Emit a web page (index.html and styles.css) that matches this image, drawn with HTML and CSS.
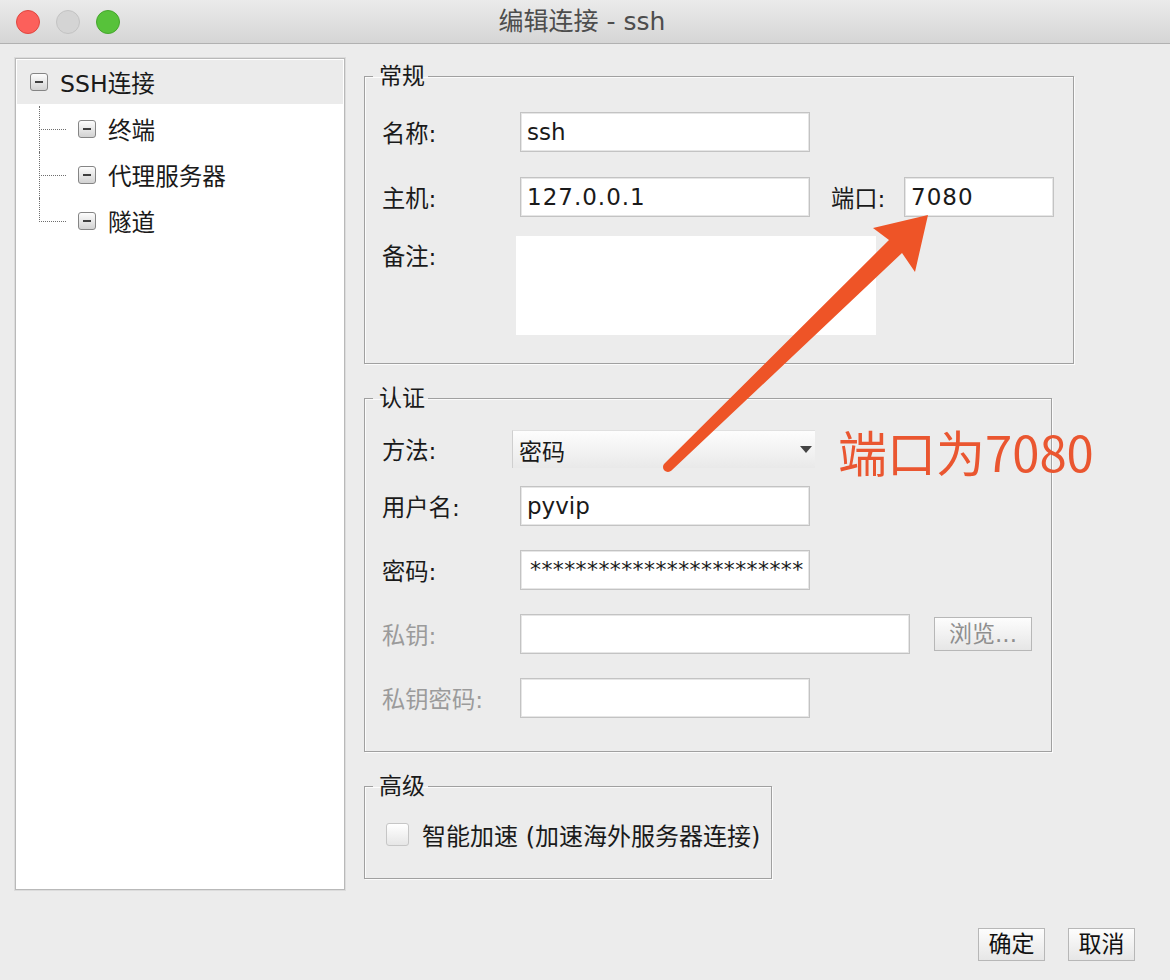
FILE: index.html
```html
<!DOCTYPE html>
<html lang="zh-CN">
<head>
	<meta charset="UTF-8">
	<title>编辑连接 - ssh</title>
	<link rel="stylesheet" href="styles.css">
</head>
<body>
<div class="window">
   <!-- 标题栏 -->
   <div class="titlebar">
      <div class="lights">
         <span class="light close"></span>
         <span class="light min"></span>
         <span class="light max"></span>
      </div>
      <div class="title">编辑连接 - ssh</div>
      <div></div>
   </div>

   <div class="main">
      <!-- 左侧树 -->
      <div class="tree">
         <div class="node root"><span class="toggle"></span>SSH连接</div>
         <div class="children">
            <div class="node"><span class="toggle"></span>终端</div>
            <div class="node"><span class="toggle"></span>代理服务器</div>
            <div class="node"><span class="toggle"></span>隧道</div>
         </div>
      </div>

      <!-- 右侧表单 -->
      <div class="forms">
         <fieldset class="group general">
            <legend>常规</legend>
            <div class="row">
               <label>名称:</label>
               <div class="field w290">ssh</div>
            </div>
            <div class="row gap25">
               <label>主机:</label>
               <div class="field w290 num">127.0.0.1</div>
               <label class="port-label">端口:</label>
               <div class="field w150 num">7080</div>
            </div>
            <div class="row note gap19">
               <label>备注:</label>
               <div class="textarea"></div>
            </div>
         </fieldset>

         <fieldset class="group auth">
            <legend>认证</legend>
            <div class="row">
               <label>方法:</label>
               <div class="combo">密码<span class="caret"></span></div>
            </div>
            <div class="row gap17">
               <label>用户名:</label>
               <div class="field w290">pyvip</div>
            </div>
            <div class="row gap24">
               <label>密码:</label>
               <div class="field w290 pwd">************************</div>
            </div>
            <div class="row gap24 disabled">
               <label>私钥:</label>
               <div class="field w390"></div>
               <button class="btn browse">浏览...</button>
            </div>
            <div class="row gap24 disabled">
               <label>私钥密码:</label>
               <div class="field w290"></div>
            </div>
         </fieldset>

         <fieldset class="group advanced">
            <legend>高级</legend>
            <div class="check-row">
               <span class="check"></span>智能加速 (加速海外服务器连接)
            </div>
         </fieldset>
      </div>
   </div>

   <div class="actions">
      <button class="btn">确定</button>
      <button class="btn">取消</button>
   </div>

   <!-- 标注 -->
   <svg class="arrow" width="1170" height="980" viewBox="0 0 1170 980">
      <path d="M873 228 L928 215 L915 272 L902 253 L671.5 470.6 A5 5 0 0 1 664.5 463.4 L889 240 Z" fill="#ee5427"/>
   </svg>
   <div class="annotation">端口为7080</div>
</div>
</body>
</html>
```

FILE: styles.css
```css
* {
	box-sizing: border-box;
}
html, body {
	margin: 0;
	background: #ececec;
}
body {
	font-family: "DejaVu Sans", "Noto Sans CJK SC", sans-serif;
	color: #1a1a1a;
}
.window {
	position: relative;
	width: 1170px;
	height: 980px;
	overflow: hidden;
	background: #ececec;
}

/* 标题栏 */
.titlebar {
	height: 44px;
	display: grid;
	grid-template-columns: 1fr auto 1fr;
	align-items: center;
	background: linear-gradient(#ebebeb, #d5d5d5);
	border-bottom: 1px solid #b1b1b1;
}
.lights {
	display: flex;
	gap: 16px;
	padding-left: 16px;
}
.light {
	width: 24px;
	height: 24px;
	border-radius: 50%;
}
.close {
	background: #fc605b;
	border: 1px solid #e0463f;
}
.min {
	background: #d4d4d4;
	border: 1px solid #c3c3c3;
}
.max {
	background: #57c23a;
	border: 1px solid #45a62d;
}
.title {
	font-size: 25px;
	line-height: 30px;
	color: #4d4d4d;
	margin-left: -6px;
}

/* 主体 */
.main {
	display: flex;
	align-items: flex-start;
	gap: 19px;
	padding: 14px 0 0 15px;
}

/* 树 */
.tree {
	width: 330px;
	height: 832px;
	background: #fff;
	border: 1px solid #b9b9b9;
	box-shadow: 0 0 0 1px #dcdcdc;
	padding: 1px;
	font-size: 23.6px;
}
.node {
	display: flex;
	align-items: center;
	height: 44px;
}
.root {
	background: #ebebeb;
	padding-left: 13px;
}
.toggle {
	width: 18px;
	height: 18px;
	margin-right: 12px;
	border: 1px solid #858585;
	border-radius: 3px;
	background: linear-gradient(#fdfdfd, #d2d2d2);
	display: flex;
	align-items: center;
	justify-content: center;
}
.toggle::after {
	content: "";
	width: 8px;
	height: 2px;
	background: #3f3f3f;
}
.children {
	padding-top: 2px;
}
.children .node {
	position: relative;
	height: 46px;
	padding-left: 61px;
}
.children .node::before {
	content: "";
	position: absolute;
	left: 22px;
	top: 0;
	width: 26px;
	height: 50%;
	border-left: 1px dotted #6e6e6e;
	border-bottom: 1px dotted #6e6e6e;
}
.children .node:not(:last-child)::after {
	content: "";
	position: absolute;
	left: 22px;
	top: 50%;
	height: 50%;
	border-left: 1px dotted #6e6e6e;
}

/* 表单 */
.forms {
	margin-top: 3px;
	display: flex;
	flex-direction: column;
	align-items: flex-start;
	gap: 19px;
}
.group {
	margin: 0;
	min-width: 0;
	padding: 0 0 0 17px;
	border: 1px solid #a0a0a0;
	box-shadow: inset 1px 1px 0 #fbfbfb, 1px 1px 0 #fbfbfb;
}
.group legend {
	font-size: 23px;
	line-height: 30px;
	padding: 0 3px 0 6px;
	margin-left: -9px;
}
.general {
	width: 710px;
	padding-top: 21px;
	padding-bottom: 28px;
}
.auth {
	width: 688px;
	padding-top: 16px;
	padding-bottom: 33px;
}
.advanced {
	width: 408px;
	padding-top: 18px;
	padding-bottom: 29px;
}
.row {
	display: flex;
	align-items: center;
	height: 40px;
}
.gap17 { margin-top: 17px; }
.gap19 { margin-top: 19px; }
.gap24 { margin-top: 24px; }
.gap25 { margin-top: 25px; }
.row label {
	flex: none;
	width: 138px;
	font-size: 23.3px;
}
.disabled label {
	color: #9b9b9b;
}
.field {
	height: 40px;
	padding-left: 6px;
	background: #fff;
	border: 1px solid #c3c3c3;
	box-shadow: inset 0 0 0 1px #e6e6e6;
	font-size: 23px;
	line-height: 38px;
	white-space: nowrap;
	overflow: hidden;
}
.w150 { width: 150px; }
.w290 { width: 290px; }
.w390 { width: 390px; }
.num {
	letter-spacing: 1px;
}
.pwd {
	padding-left: 9px;
	font-size: 22px;
	letter-spacing: 0.4px;
}
.row .port-label {
	width: 73px;
	margin-left: 21px;
}
.note {
	height: 99px;
	align-items: flex-start;
}
.note label {
	margin-top: 2px;
}
.textarea {
	width: 360px;
	height: 99px;
	margin-left: -4px;
	background: #fff;
}
.combo {
	width: 303px;
	height: 38px;
	margin-left: -8px;
	padding: 0 3px 0 6px;
	display: flex;
	align-items: center;
	justify-content: space-between;
	background: linear-gradient(#fdfdfd, #e9e9e9);
	border-left: 1px solid #cfcfcf;
	border-top: 1px solid #e0e0e0;
	font-size: 23px;
}
.caret {
	width: 0;
	height: 0;
	border-left: 6px solid transparent;
	border-right: 6px solid transparent;
	border-top: 7px solid #444;
}
.btn {
	width: 67px;
	height: 33px;
	padding: 0;
	font-family: inherit;
	font-size: 23px;
	line-height: 31px;
	color: #111;
	border: 1px solid #b7b7b7;
	background: linear-gradient(#fdfdfd, #e6e6e6);
}
.browse {
	width: 98px;
	height: 34px;
	margin-left: 24px;
	color: #8f8f8f;
}
.check-row {
	display: flex;
	align-items: center;
	height: 30px;
	font-size: 24px;
}
.check {
	width: 23px;
	height: 23px;
	margin: 0 13px 0 4px;
	border: 1px solid #c6c6c6;
	border-radius: 3px;
	background: linear-gradient(#fff, #e6e6e6);
}

/* 底部按钮 */
.actions {
	display: flex;
	justify-content: flex-end;
	gap: 23px;
	margin-top: 38px;
	padding-right: 35px;
}

/* 标注 */
.arrow {
	position: absolute;
	left: 0;
	top: 0;
	pointer-events: none;
}
.annotation {
	position: absolute;
	left: 838px;
	top: 426px;
	font-family: "Noto Sans CJK SC", sans-serif;
	font-size: 49px;
	line-height: 50px;
	color: #ea5630;
}
```
